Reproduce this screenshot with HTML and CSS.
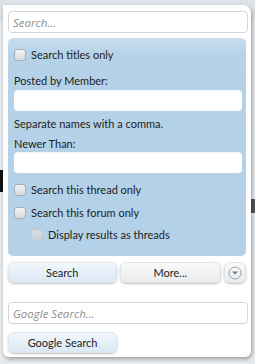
FILE: index.html
```html
<!DOCTYPE html>
<html lang="en">
<head>
    <meta charset="UTF-8">
    <title>Search</title>
    <link rel="stylesheet" href="styles.css">
</head>
<body>
    <div class="page">
        <div class="band"></div>
        <div class="dark-left"></div>
        <div class="dark-right"></div>
    </div>
    <div class="popup">
        <input type="text" class="field" placeholder="Search...">
        <div class="panel">
            <label class="check"><span class="box"></span>Search titles only</label>
            <div class="label posted">Posted by Member:</div>
            <input type="text" class="field inner member">
            <div class="label hint">Separate names with a comma.</div>
            <div class="label newer">Newer Than:</div>
            <input type="text" class="field inner date">
            <label class="check thread"><span class="box"></span>Search this thread only</label>
            <label class="check forum"><span class="box"></span>Search this forum only</label>
            <label class="check sub"><span class="box off"></span>Display results as threads</label>
        </div>
        <div class="buttons">
            <button class="btn primary">Search</button>
            <button class="btn more">More...</button>
            <button class="btn round">
                <svg width="14" height="14" viewBox="0 0 14 14">
                    <circle cx="7" cy="7" r="6" fill="none" stroke="#9a9fa5" stroke-width="1"/>
                    <path d="M4.2 5.6h5.6l-2.8 3z" fill="#6d7278"/>
                </svg>
            </button>
        </div>
        <input type="text" class="field google" placeholder="Google Search...">
        <button class="btn primary gbtn">Google Search</button>
    </div>
</body>
</html>
```

FILE: styles.css
```css
body {
    margin: 0;
    width: 255px;
    height: 364px;
    overflow: hidden;
    background: #e9ecef;
    font-family: Lato, "Open Sans", sans-serif;
    font-size: 11px;
    color: #222;
    position: relative;
}
.page .band {
    position: absolute;
    left: 0;
    top: 0;
    width: 255px;
    height: 22px;
    background: #dde3e9;
}
.page .dark-left {
    position: absolute;
    left: 0;
    top: 170px;
    width: 5px;
    height: 22px;
    background: #111;
}
.page .dark-right {
    position: absolute;
    left: 251px;
    top: 199px;
    width: 4px;
    height: 14px;
    background: #555;
}
.popup {
    position: absolute;
    left: 3px;
    top: 5px;
    width: 238px;
    padding: 6px 5px 4px 5px;
    background: #fff;
    border-radius: 0 8px 6px 6px;
    box-shadow: 1px 2px 4px rgba(0,0,0,0.35);
}
.field {
    display: block;
    box-sizing: border-box;
    width: 240px;
    height: 22px;
    margin: 0;
    padding: 0 4px;
    border: 1px solid #d2d6da;
    border-radius: 4px;
    background: #fff;
    font-family: "Open Sans", sans-serif;
    font-size: 11.5px;
    color: #333;
}
.field::placeholder {
    color: #8e8e8e;
    font-style: italic;
}
.panel {
    margin-top: 5px;
    padding: 10px 6px 15px 6px;
    border-radius: 5px;
    background: linear-gradient(#c8ddef 0px, #b5d2e8 18px, #b3d1e8 100%);
}
.check {
    display: flex;
    align-items: center;
    height: 13px;
    line-height: 13px;
}
.check.thread {
    margin-top: 10px;
}
.check.forum {
    margin-top: 10px;
}
.check.sub {
    margin-top: 9px;
    padding-left: 17px;
}
.box {
    display: inline-block;
    box-sizing: border-box;
    width: 12px;
    height: 12px;
    margin-right: 5px;
    border: 1px solid #a9aeb3;
    border-radius: 3px;
    background: linear-gradient(#f4f4f4, #d8d9da);
}
.box.off {
    border-color: #c3c9cf;
    background: linear-gradient(#d5dde4, #c6d1db);
}
.label {
    line-height: 13px;
}
.label.posted {
    margin-top: 13px;
}
.label.hint {
    margin-top: 6px;
}
.label.newer {
    margin-top: 7px;
}
.field.inner {
    width: 228px;
    height: 21px;
    border: none;
    border-radius: 4px;
    box-shadow: inset 0 1px 1px rgba(0,0,0,0.05);
}
.field.member {
    margin-top: 3px;
}
.field.date {
    margin-top: 2px;
}
.buttons {
    display: flex;
    gap: 3px;
    margin-top: 6px;
}
.btn {
    box-sizing: border-box;
    height: 21px;
    margin: 0;
    padding: 0;
    border: 1px solid #dfe3e7;
    border-radius: 6px;
    font-family: Lato, "Open Sans", sans-serif;
    font-size: 11px;
    color: #222;
    box-shadow: 0 1px 2px rgba(0,0,0,0.25);
}
.btn.primary {
    width: 109px;
    background: linear-gradient(#f2f7fc, #dae8f4);
}
.btn.more {
    width: 102px;
    background: linear-gradient(#fafafa, #e9ebee);
}
.btn.round {
    width: 22px;
    display: flex;
    align-items: center;
    justify-content: center;
    background: linear-gradient(#fafafa, #e9ebee);
}
.field.google {
    margin-top: 19px;
}
.gbtn {
    display: block;
    margin-top: 8px;
}
```
